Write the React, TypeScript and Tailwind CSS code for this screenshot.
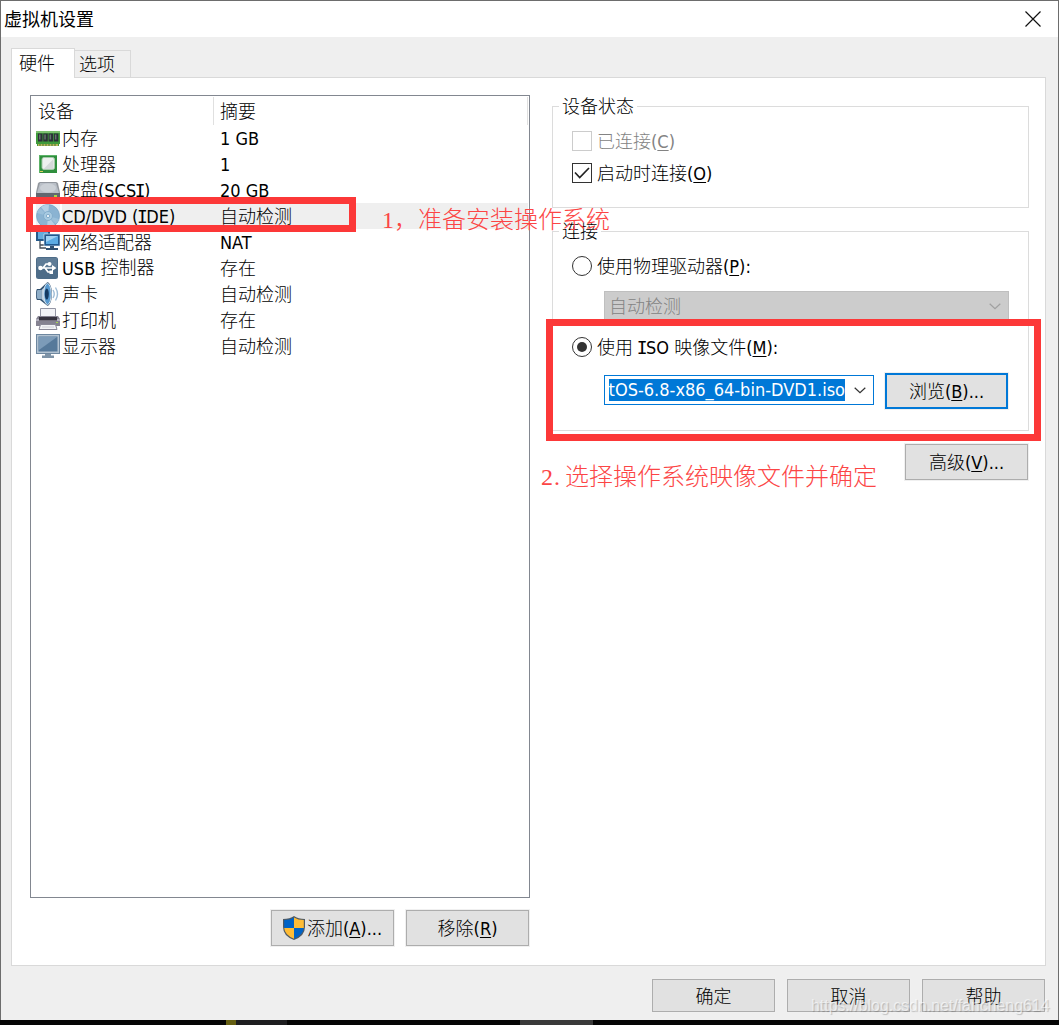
import { type ReactNode } from "react";
import clsx from "clsx";

// Splits mixed text so the CJK and Latin runs can use different faces.
// "&X" marks a mnemonic letter, which is drawn underlined.
function Label({ text, raised }: { text: string; raised?: boolean }) {
  const runs = text.match(/[\u3000-\u9fff]+|&.|I|[^\u3000-\u9fff&I]+/g) ?? [];
  return (
    <span className="whitespace-pre">
      {runs.map((run, i) => {
        if (run.startsWith("&")) {
          return (
            <span key={i} className="font-['DejaVu_Sans_Condensed','Noto_Sans',sans-serif] underline underline-offset-2">
              {run[1]}
            </span>
          );
        }
        if (/[\u3000-\u9fff]/.test(run)) {
          return (
            <span key={i} className={clsx("font-['Noto_Sans_CJK_SC',sans-serif] font-light", raised && "relative -top-px")}>
              {run}
            </span>
          );
        }
        // Capital I is drawn with serifs
        if (run === "I") {
          return (
            <span key={i} className="-mx-[1.5px] font-['DejaVu_Sans_Mono',monospace]">
              I
            </span>
          );
        }
        return (
          <span key={i} className="font-['DejaVu_Sans_Condensed','Noto_Sans',sans-serif]">
            {run}
          </span>
        );
      })}
    </span>
  );
}

function MemoryIcon() {
  return (
    <>
      <path d="M0 5h24v13h-1v2H1v-2H0z" fill="#3f9a3c" />
      <path d="M0 5h24v2H0z" fill="#7cc070" />
      <path d="M2 7.500h4.500v8H2zM7.300 7.500h4.500v8H7.300zM12.600 7.500h4.500v8h-4.500zM17.900 7.500h4.500v8h-4.500z" fill="#2b3138" />
      <path d="M3 8.500h1.500v5H3zM8.300 8.500h1.500v5H8.300zM13.600 8.500h1.500v5h-1.500zM18.900 8.500h1.500v5h-1.500z" fill="#65706f" />
      <path d="M2 18h20v2H2z" fill="#b8b558" />
      <path d="M4 18v2M7 18v2M10 18v2M13 18v2M16 18v2M19 18v2" stroke="#3c7a34" />
    </>
  );
}

function ProcessorIcon() {
  return (
    <>
      <rect x="3" y="3" width="18" height="18" fill="#2f8f3d" />
      <path d="M3 3h18v1H4v17H3z" fill="#5db368" />
      <rect x="6" y="5.500" width="12.500" height="12" rx="2" fill="#eef0ef" stroke="#a6c9aa" />
      <path d="M7.500 17 17.500 7v10z" fill="#d5d9da" />
      <path d="M4 19h3v1H4z" fill="#d9d25c" />
    </>
  );
}

function DiskIcon() {
  return (
    <>
      <path d="M4 4h16q1.500 0 2 1.500l2 9v5q0 2-2 2H2q-2 0-2-2v-5l2-9Q2.500 4 4 4z" fill="#92979e" />
      <path d="M4 5h16l3 10H1z" fill="#b9bfc7" />
      <ellipse cx="12" cy="10" rx="8" ry="4.500" fill="#cbd0d6" />
      <path d="M0 15h24v6H0z" fill="#62676f" />
      <path d="M18 17h3v2h-3z" fill="#a8d943" />
    </>
  );
}

function DiscIcon() {
  return (
    <>
      <path d="M0 0h24v24H0z" fill="#eef3f7" />
      <circle cx="12" cy="12" r="11.500" fill="#8ab3d2" stroke="#769fc0" strokeWidth=".7" />
      <path d="M12 12 5 3a11 11 0 0 1 8-2.500zM12 12l7 9a11 11 0 0 1-8 2.500z" fill="#b4d0e5" />
      <path d="M12 12 1 9a11 11 0 0 1 3-5zM12 12l11 3a11 11 0 0 1-3 5z" fill="#9bc0da" />
      <circle cx="12" cy="12" r="4.500" fill="#a9cbe2" stroke="#83adcc" />
      <circle cx="12" cy="12" r="1.700" fill="#e3eff7" stroke="#6998bd" strokeWidth=".7" />
    </>
  );
}

function NetworkIcon() {
  return (
    <>
      <path d="M0 0h14v11H0z" fill="#255a8b" />
      <path d="M2 2h10v7H2z" fill="#65abdc" />
      <path d="M4 11v7h6M4 15h5" fill="none" stroke="#444e59" strokeWidth="1.300" />
      <path d="M8 4h16v12H8z" fill="#20588f" stroke="#e7f1f9" strokeWidth=".6" />
      <path d="M10 6h12v8H10z" fill="#5cabe3" />
      <path d="M10 6h12l-12 6z" fill="#a0d2f3" />
      <path d="M14 16h4v2h4v2H10v-2h4z" fill="#315171" />
    </>
  );
}

function UsbIcon() {
  return (
    <>
      <rect x="0" y="1" width="22" height="22" rx="2.500" fill="#4d6c88" />
      <path d="M1 2h20v9H1z" fill="#5f7c96" />
      <path d="M4 12h13M7 12l3-4h3M9 12l3 4h3" fill="none" stroke="#fff" strokeWidth="1.700" />
      <circle cx="4.500" cy="12" r="2.300" fill="#fff" />
      <path d="m16 9 4.500 3-4.500 3zM13.500 14.500h3.500V18h-3.500z" fill="#fff" />
      <circle cx="13.500" cy="8" r="2" fill="#fff" />
    </>
  );
}

function SoundIcon() {
  return (
    <>
      <path d="M1 7h3l7-6.500q1-.5 2 .5 3 4 3 11t-3 11q-1 1-2 .5L4 18H1q-1-1-1-5.500T1 7z" fill="#31506f" />
      <path d="M1.500 8h4v9h-4q-.8-1-.8-4.500T1.500 8z" fill="#8faec8" />
      <path d="m5.500 8 4-4v17l-4-4z" fill="#bed1e0" />
      <ellipse cx="11.500" cy="12" rx="3.700" ry="10.500" fill="#5799cf" stroke="#d2e2ef" />
      <ellipse cx="10.800" cy="12" rx="2" ry="5.500" fill="#143a62" />
      <path d="M17 8q2.500 4 0 8M19.500 5.500q4 6.500 0 13" fill="none" stroke="#9ebcd6" strokeWidth="1.400" />
    </>
  );
}

function PrinterIcon() {
  return (
    <>
      <path d="M4.500.500h15v10h-15z" fill="#f2f3f7" stroke="#9496a5" />
      <path d="M2 8h20l2 3v7H0v-7z" fill="#858291" />
      <path d="M0 11h24v2H0z" fill="#b5b2c0" />
      <path d="M3 9h18v3.500H3z" fill="#36333f" />
      <path d="M4.500 16.500h15l1.500 5H3z" fill="#f3f3f6" stroke="#8b8998" />
      <path d="M6 19h12" stroke="#cfcfd8" />
      <path d="M20 14h2v1h-2z" fill="#a4d94e" />
    </>
  );
}

function DisplayIcon() {
  return (
    <>
      <path d="M0 0h24v20H0z" fill="#6e879f" />
      <path d="M1 1h22v18H1z" fill="#b3c3d2" />
      <path d="M2.500 2.500h19v15h-19z" fill="#56799a" />
      <path d="M3 3h18L3 16z" fill="#7c9bb8" />
      <path d="M9 20h6v1.500h3V24H6v-2.500h3z" fill="#7e93a7" />
    </>
  );
}

const devices: { name: string; summary: string; icon: ReactNode; selected?: boolean }[] = [
  { name: "内存", summary: "1 GB", icon: <MemoryIcon /> },
  { name: "处理器", summary: "1", icon: <ProcessorIcon /> },
  { name: "硬盘(SCSI)", summary: "20 GB", icon: <DiskIcon /> },
  { name: "CD/DVD (IDE)", summary: "自动检测", icon: <DiscIcon />, selected: true },
  { name: "网络适配器", summary: "NAT", icon: <NetworkIcon /> },
  { name: "USB 控制器", summary: "存在", icon: <UsbIcon /> },
  { name: "声卡", summary: "自动检测", icon: <SoundIcon /> },
  { name: "打印机", summary: "存在", icon: <PrinterIcon /> },
  { name: "显示器", summary: "自动检测", icon: <DisplayIcon /> },
];

function DeviceList() {
  return (
    <div className="h-[803px] w-[500px] border border-[#828790] bg-white">
      <div className="flex h-[29px] pt-px pr-px">
        <div className="flex w-[183px] items-center border-r border-[#e0e0e0] pl-[7px]">
          <Label text="设备" raised />
        </div>
        <div className="flex flex-1 items-center border-r border-[#e0e0e0] pl-1.5">
          <Label text="摘要" raised />
        </div>
      </div>
      {devices.map((device) => (
        <div key={device.name} className="flex h-[26px] items-center pr-px pl-[5px]">
          <svg viewBox="0 0 24 24" className="size-6 shrink-0">
            {device.icon}
          </svg>
          <div className={clsx("ml-0.5 flex h-full flex-1 items-center", device.selected && "bg-[#efefef]")}>
            <div className="w-[158px]">
              <Label text={device.name} raised />
            </div>
            <Label text={device.summary} raised />
          </div>
        </div>
      ))}
    </div>
  );
}

function Button({ text, className, icon }: { text: string; className?: string; icon?: ReactNode }) {
  return (
    <button
      className={clsx(
        "flex w-[123px] shrink-0 items-center justify-center border bg-[#e1e1e1] outline outline-[#f0f0f0]",
        className ?? "h-9 border-[#adadad]"
      )}
    >
      {icon}
      <Label text={text} />
    </button>
  );
}

function ShieldIcon() {
  return (
    <svg viewBox="0 0 22 24" className="mr-0.5 h-6 w-[22px] shrink-0">
      <path d="M11 0Q7 3 0 3v8q0 9 11 13 11-4 11-13V3q-7 0-11-3z" fill="#505a63" />
      <path d="M10.900 1.500Q7 4 1.200 4v8h9.700z" fill="#0063c6" />
      <path d="M11 1.500Q15 4 20.800 4v8H11zM1.200 12q.5 7 9.800 10.700V12z" fill="#ffbc35" />
      <path d="M11 12h9.800q-.5 7-9.800 10.700z" fill="#0063c6" />
    </svg>
  );
}

function Chevron({ className }: { className: string }) {
  return (
    <svg viewBox="0 0 12 7" className={clsx("h-[7px] w-3 shrink-0", className)}>
      <path d="m.7.700 5.300 5 5.300-5" fill="none" stroke="currentColor" strokeWidth="1.200" />
    </svg>
  );
}

function CheckBox({ text, checked, disabled }: { text: string; checked?: boolean; disabled?: boolean }) {
  return (
    <div className={clsx("flex h-5 items-center gap-[5px]", disabled ? "text-[#838383]" : "text-black")}>
      <span className={clsx("flex size-5 items-center justify-center border", disabled ? "border-[#cccccc]" : "border-[#333]")}>
        {checked && (
          <svg viewBox="0 0 16 12" className="h-3 w-4">
            <path d="m1 5.500 4.700 5L15 1" fill="none" stroke="#222" strokeWidth="1.700" />
          </svg>
        )}
      </span>
      <Label text={text} />
    </div>
  );
}

function Radio({ text, checked }: { text: string; checked?: boolean }) {
  return (
    <div className="flex h-5 items-center gap-[5px]">
      <span className="flex size-5 items-center justify-center rounded-full border border-[#333]">
        {checked && <span className="size-2.5 rounded-full bg-[#333]" />}
      </span>
      <Label text={text} />
    </div>
  );
}

function GroupBox({ title, className, children }: { title: string; className: string; children: ReactNode }) {
  return (
    <section className={clsx("relative border border-[#dcdcdc]", className)}>
      <h2 className="absolute -top-[13px] left-1.5 h-6 bg-white px-[3px] leading-6">
        <Label text={title} raised />
      </h2>
      {children}
    </section>
  );
}

function HardwarePanel() {
  return (
    <div className="flex h-[889px] border border-[#d9d9d9] bg-white pt-[17px] pl-[18px]">
      <div className="w-[500px]">
        <DeviceList />
        <div className="mt-3 flex justify-end gap-3 pr-px">
          <Button text="添加(&A)..." icon={<ShieldIcon />} />
          <Button text="移除(&R)" />
        </div>
      </div>
      <div className="ml-[22px] w-[477px] pt-[11px]">
        <GroupBox title="设备状态" className="h-[102px] pt-6 pl-[19px]">
          <CheckBox text="已连接(&C)" disabled />
          <div className="h-3" />
          <CheckBox text="启动时连接(&O)" checked />
        </GroupBox>
        <GroupBox title="连接" className="mt-[23px] h-[200px] pt-6 pl-[19px]">
          <Radio text="使用物理驱动器(&P):" />
          <div className="mt-[15px] ml-8 flex h-[30px] w-[405px] items-center justify-between border border-[#bfbfbf] bg-[#cccccc] pr-[7px] pl-1 text-[#838383]">
            <Label text="自动检测" raised />
            <Chevron className="text-[#a0a0a0]" />
          </div>
          <div className="h-4" />
          <Radio text="使用 ISO 映像文件(&M):" checked />
          <div className="mt-4 ml-8 flex items-start gap-[11px]">
            <div className="mt-0.5 flex h-[30px] w-[270px] items-center border border-[#0078d7] bg-white pl-1">
              <div className="flex h-[22px] w-[236px] items-center justify-end overflow-hidden bg-[#0078d7] pb-0.5 text-white">
                <Label text="tOS-6.8-x86_64-bin-DVD1.iso" />
              </div>
              <Chevron className="ml-[9px] text-[#333]" />
            </div>
            <Button text="浏览(&B)..." className="h-9 border-2 border-[#0078d7]" />
          </div>
        </GroupBox>
        <div className="mt-[13px] flex justify-end pr-px">
          <Button text="高级(&V)..." />
        </div>
      </div>
    </div>
  );
}

function Annotations() {
  return (
    <>
      <div className="absolute top-[197px] left-[26px] h-[35px] w-[330px] border-[7px] border-[#fc3838]" />
      <div className="absolute top-[319px] left-[546px] h-[122px] w-[495px] border-[7px] border-[#fc3838]" />
      <p className="absolute top-[204px] left-[382px] font-['Liberation_Serif','Noto_Sans_CJK_SC',serif] text-2xl leading-8 font-light whitespace-nowrap text-[#fc4545]">
        1，准备安装操作系统
      </p>
      <p className="absolute top-[461px] left-[541px] font-['Liberation_Serif','Noto_Sans_CJK_SC',serif] text-2xl leading-8 font-light whitespace-nowrap text-[#fc4545]">
        2<span className="inline-block w-3 pl-px">.</span>选择操作系统映像文件并确定
      </p>
      <p className="absolute top-[996px] left-[811px] font-['Liberation_Sans',sans-serif] text-[15.9px] leading-5 whitespace-nowrap text-white/60 [text-shadow:1px_1px_1px_#00000033]">
        https://blog.csdn.net/fancheng614
      </p>
    </>
  );
}

export default function App() {
  return (
    <main className="relative h-[1025px] w-[1059px] overflow-hidden bg-[#050505] text-[18px] leading-6 text-black">
      <div className="h-[1020px] border-x border-t border-[#6d6d6d] bg-[#efefef]">
        <header className="flex h-9 items-center justify-between bg-white pr-[17px] pl-[3px]">
          <h1 className="-mt-[3px] font-['Noto_Sans_CJK_SC',sans-serif] font-normal">虚拟机设置</h1>
          <svg viewBox="0 0 16 16" className="-mt-px size-4">
            <path d="m.5.500 15 15m0-15-15 15" stroke="#111" strokeWidth="1.200" />
          </svg>
        </header>
        <div className="w-[1045px] pt-[11px] pl-2.5">
          <nav className="flex h-[29px] items-end">
            <div className="z-10 -mb-px h-[30px] w-16 border border-b-0 border-[#d9d9d9] bg-white pt-0.5 pl-[7px]">
              <Label text="硬件" raised />
            </div>
            <div className="-ml-px h-[27px] w-[57px] border border-b-0 border-[#d9d9d9] pt-px pl-1">
              <Label text="选项" raised />
            </div>
          </nav>
          <HardwarePanel />
        </div>
        <footer className="mt-[13px] flex justify-end gap-3 pr-[13px]">
          <Button text="确定" className="h-[33px] border-[#adadad]" />
          <Button text="取消" className="h-[33px] border-[#adadad]" />
          <Button text="帮助" className="h-[33px] border-[#adadad]" />
        </footer>
      </div>
      <div className="flex h-[5px] pl-[226px]">
        <div className="w-2.5 bg-[#655f12]" />
        <div className="w-[51px] bg-[#1e1e20]" />
        <div className="ml-[233px] w-[73px] bg-[#3a3a3a]" />
      </div>
      <Annotations />
    </main>
  );
}
